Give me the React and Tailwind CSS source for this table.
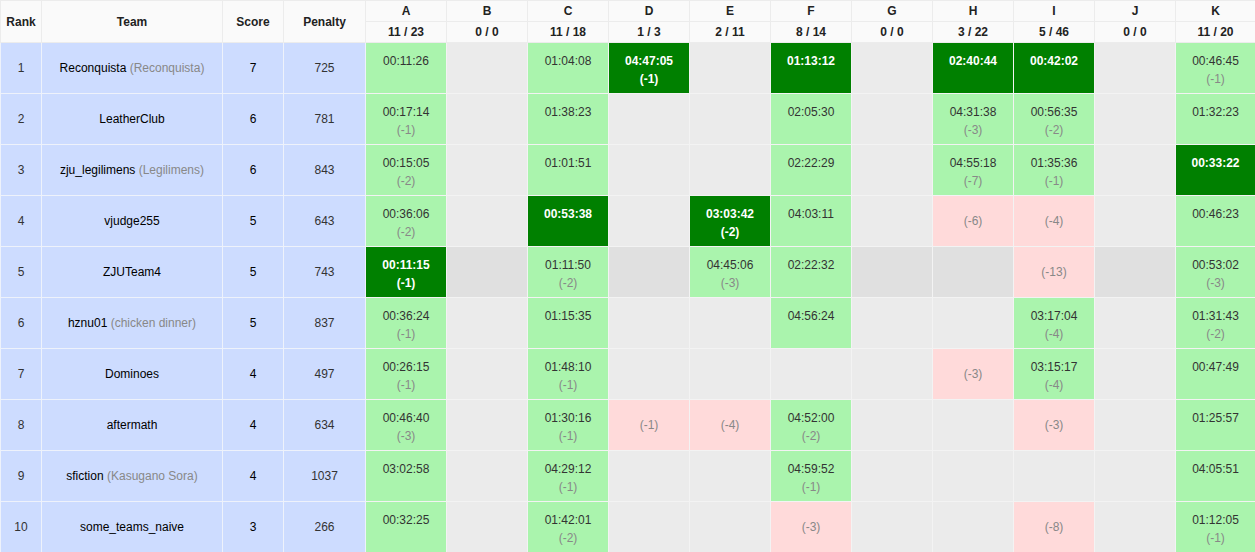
import React from 'react';

const problems = [
    { id: 'A', stat: '11 / 23' },
    { id: 'B', stat: '0 / 0' },
    { id: 'C', stat: '11 / 18' },
    { id: 'D', stat: '1 / 3' },
    { id: 'E', stat: '2 / 11' },
    { id: 'F', stat: '8 / 14' },
    { id: 'G', stat: '0 / 0' },
    { id: 'H', stat: '3 / 22' },
    { id: 'I', stat: '5 / 46' },
    { id: 'J', stat: '0 / 0' },
    { id: 'K', stat: '11 / 20' },
];

// cell codes: null = untouched, { t, p, fb } = solved, { p } without t = failed
const rows = [
    {
        rank: 1, team: 'Reconquista', alias: 'Reconquista', score: 7, penalty: 725,
        cells: [
            { t: '00:11:26' }, null, { t: '01:04:08' }, { t: '04:47:05', p: 1, fb: true }, null,
            { t: '01:13:12', fb: true }, null, { t: '02:40:44', fb: true }, { t: '00:42:02', fb: true }, null,
            { t: '00:46:45', p: 1 },
        ],
    },
    {
        rank: 2, team: 'LeatherClub', score: 6, penalty: 781,
        cells: [
            { t: '00:17:14', p: 1 }, null, { t: '01:38:23' }, null, null,
            { t: '02:05:30' }, null, { t: '04:31:38', p: 3 }, { t: '00:56:35', p: 2 }, null,
            { t: '01:32:23' },
        ],
    },
    {
        rank: 3, team: 'zju_legilimens', alias: 'Legilimens', score: 6, penalty: 843,
        cells: [
            { t: '00:15:05', p: 2 }, null, { t: '01:01:51' }, null, null,
            { t: '02:22:29' }, null, { t: '04:55:18', p: 7 }, { t: '01:35:36', p: 1 }, null,
            { t: '00:33:22', fb: true },
        ],
    },
    {
        rank: 4, team: 'vjudge255', score: 5, penalty: 643,
        cells: [
            { t: '00:36:06', p: 2 }, null, { t: '00:53:38', fb: true }, null, { t: '03:03:42', p: 2, fb: true },
            { t: '04:03:11' }, null, { p: 6 }, { p: 4 }, null,
            { t: '00:46:23' },
        ],
    },
    {
        rank: 5, team: 'ZJUTeam4', score: 5, penalty: 743, hover: true,
        cells: [
            { t: '00:11:15', p: 1, fb: true }, null, { t: '01:11:50', p: 2 }, null, { t: '04:45:06', p: 3 },
            { t: '02:22:32' }, null, null, { p: 13 }, null,
            { t: '00:53:02', p: 3 },
        ],
    },
    {
        rank: 6, team: 'hznu01', alias: 'chicken dinner', score: 5, penalty: 837,
        cells: [
            { t: '00:36:24', p: 1 }, null, { t: '01:15:35' }, null, null,
            { t: '04:56:24' }, null, null, { t: '03:17:04', p: 4 }, null,
            { t: '01:31:43', p: 2 },
        ],
    },
    {
        rank: 7, team: 'Dominoes', score: 4, penalty: 497,
        cells: [
            { t: '00:26:15', p: 1 }, null, { t: '01:48:10', p: 1 }, null, null,
            null, null, { p: 3 }, { t: '03:15:17', p: 4 }, null,
            { t: '00:47:49' },
        ],
    },
    {
        rank: 8, team: 'aftermath', score: 4, penalty: 634,
        cells: [
            { t: '00:46:40', p: 3 }, null, { t: '01:30:16', p: 1 }, { p: 1 }, { p: 4 },
            { t: '04:52:00', p: 2 }, null, null, { p: 3 }, null,
            { t: '01:25:57' },
        ],
    },
    {
        rank: 9, team: 'sfiction', alias: 'Kasugano Sora', score: 4, penalty: 1037,
        cells: [
            { t: '03:02:58' }, null, { t: '04:29:12', p: 1 }, null, null,
            { t: '04:59:52', p: 1 }, null, null, null, null,
            { t: '04:05:51' },
        ],
    },
    {
        rank: 10, team: 'some_teams_naive', score: 3, penalty: 266,
        cells: [
            { t: '00:32:25' }, null, { t: '01:42:01', p: 2 }, null, null,
            { p: 3 }, null, null, { p: 8 }, null,
            { t: '01:12:05', p: 1 },
        ],
    },
];

function ProblemCell({ cell, hover }) {
    if (!cell) {
        return <td className={`h-[51px] border border-[#f3f3f3] ${hover ? 'bg-[#e0e0e0]' : 'bg-[#ebebeb]'}`} />;
    }
    if (!cell.t) {
        return (
            <td className="h-[51px] border border-[#f3f3f3] bg-[#ffdada] text-center align-middle text-[#888]">
                (-{cell.p})
            </td>
        );
    }
    if (cell.fb) {
        return (
            <td className="h-[51px] border border-[#f3f3f3] bg-[#008000] text-center align-top pt-[9px] font-bold text-white leading-[18px]">
                <div>{cell.t}</div>
                {cell.p && <div>(-{cell.p})</div>}
            </td>
        );
    }
    return (
        <td className="h-[51px] border border-[#f3f3f3] bg-[#aaf4ad] text-center align-top pt-[9px] text-[#333] leading-[18px]">
            <div>{cell.t}</div>
            {cell.p && <div className="text-[#888]">(-{cell.p})</div>}
        </td>
    );
}

function App() {
    return (
        <div className="w-[1255px] h-[552px] overflow-hidden bg-[#ebebeb] font-['Liberation_Sans',Arial,sans-serif] text-[12px]">
            <table className="w-[1255px] table-fixed border-collapse">
                <colgroup>
                    <col className="w-[41px]" />
                    <col className="w-[181px]" />
                    <col className="w-[61px]" />
                    <col className="w-[82px]" />
                    {problems.map((p, i) => (
                        <col key={p.id} className={i === problems.length - 1 ? 'w-[80px]' : 'w-[81px]'} />
                    ))}
                </colgroup>
                <thead>
                    <tr className="h-[21px] bg-[#fafafa] text-[#222] font-bold">
                        <th rowSpan={2} className="border border-[#ececec]">Rank</th>
                        <th rowSpan={2} className="border border-[#ececec]">Team</th>
                        <th rowSpan={2} className="border border-[#ececec]">Score</th>
                        <th rowSpan={2} className="border border-[#ececec]">Penalty</th>
                        {problems.map((p) => (
                            <th key={p.id} className="border border-[#ececec]">{p.id}</th>
                        ))}
                    </tr>
                    <tr className="h-[21px] bg-[#fafafa] text-[#222] font-bold">
                        {problems.map((p) => (
                            <th key={p.id} className="border border-[#ececec]">{p.stat}</th>
                        ))}
                    </tr>
                </thead>
                <tbody>
                    {rows.map((r) => (
                        <tr key={r.rank} className="h-[51px]">
                            <td className="border border-[#eef2fb] bg-[#cddcff] text-center text-[#333]">{r.rank}</td>
                            <td className="border border-[#eef2fb] bg-[#cddcff] text-center text-black">
                                {r.team}
                                {r.alias && <span className="text-[#888]"> ({r.alias})</span>}
                            </td>
                            <td className="border border-[#eef2fb] bg-[#cddcff] text-center text-black">{r.score}</td>
                            <td className="border border-[#eef2fb] bg-[#cddcff] text-center text-[#333]">{r.penalty}</td>
                            {r.cells.map((c, i) => (
                                <ProblemCell key={i} cell={c} hover={r.hover} />
                            ))}
                        </tr>
                    ))}
                </tbody>
            </table>
        </div>
    );
}

export default App;
